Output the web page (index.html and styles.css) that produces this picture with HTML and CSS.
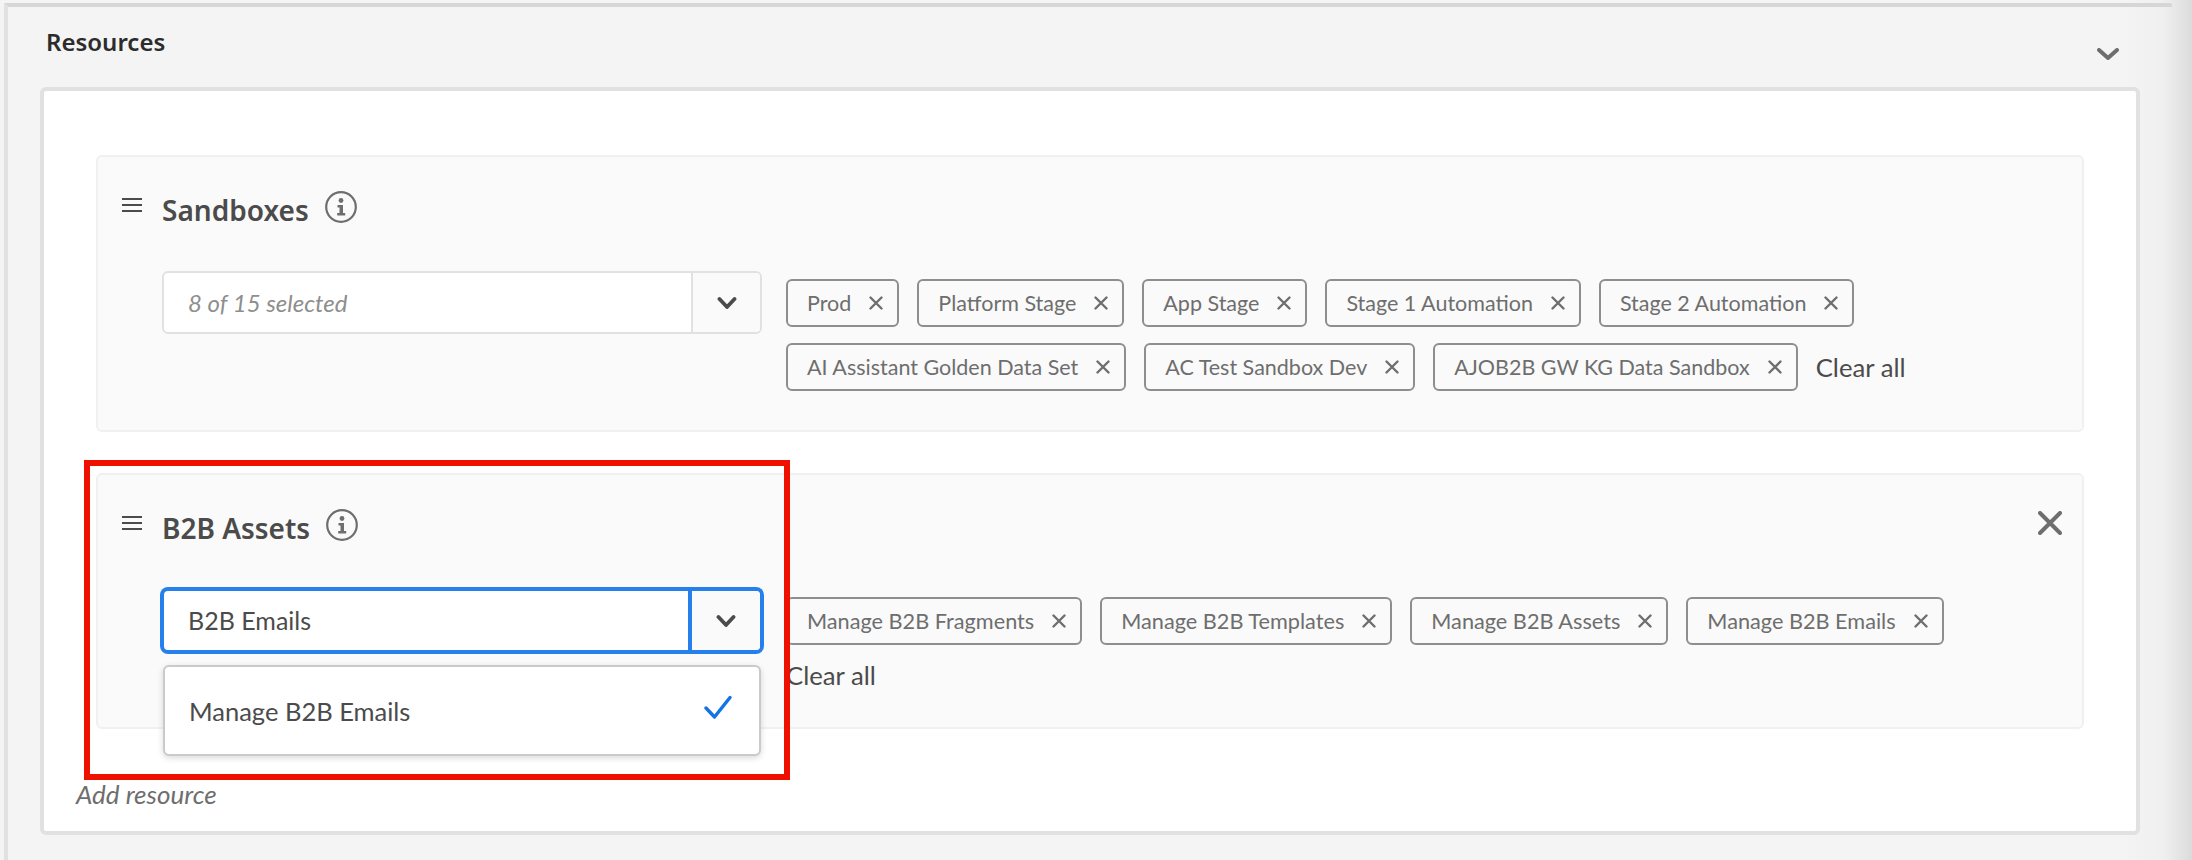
FILE: index.html
```html
<!DOCTYPE html>
<html lang="en">
<head>
    <meta charset="UTF-8">
    <meta name="viewport" content="width=device-width, initial-scale=1.0">
    <title>Resources</title>
    <link rel="stylesheet" href="styles.css">
</head>
<body>
<div class="edgeShade"></div>
<section class="section">
    <div class="sectionHead">
        <h2 class="sectionTitle">Resources</h2>
        <svg class="sectionToggle" width="22" height="12" viewBox="0 0 22 12"><path d="M2 2l9 8 9-8" fill="none" stroke="#6e6e6e" stroke-width="4" stroke-linecap="round" stroke-linejoin="round"/></svg>
    </div>

    <div class="card">
        <div class="panel panelFirst">
            <div class="panelHead">
                <svg class="dragIcon" width="20" height="14" viewBox="0 0 20 14"><path d="M0 1h20M0 7h20M0 13h20" stroke="#4b4b4b" stroke-width="2"/></svg>
                <h3 class="panelTitle">Sandboxes</h3>
                <svg class="infoIcon" width="32" height="32" viewBox="0 0 32 32"><circle cx="16" cy="16" r="14.8" fill="none" stroke="#6e6e6e" stroke-width="2.2"/><circle cx="16" cy="9.500" r="2.400" fill="#6e6e6e"/><path d="M12.500 14h5.500v8h2.200v2.400h-8V22h2.300v-5.600h-2z" fill="#6e6e6e"/></svg>
            </div>
            <div class="panelBody">
                <div class="select">
                    <div class="selectValue selectPlaceholder">8 of 15 selected</div>
                    <div class="selectButton">
                        <svg width="20" height="14" viewBox="0 0 20 14"><path d="M2.500 3l7.500 8 7.500-8" fill="none" stroke="#4b4b4b" stroke-width="3.800" stroke-linecap="round" stroke-linejoin="round"/></svg>
                    </div>
                </div>
                <div class="tags">
                    <span class="tag">Prod<svg class="tagClose" viewBox="0 0 14 14"><path d="M1.500 1.500l11 11M12.500 1.500l-11 11"/></svg></span>
                    <span class="tag">Platform Stage<svg class="tagClose" viewBox="0 0 14 14"><path d="M1.500 1.500l11 11M12.500 1.500l-11 11"/></svg></span>
                    <span class="tag">App Stage<svg class="tagClose" viewBox="0 0 14 14"><path d="M1.500 1.500l11 11M12.500 1.500l-11 11"/></svg></span>
                    <span class="tag">Stage 1 Automation<svg class="tagClose" viewBox="0 0 14 14"><path d="M1.500 1.500l11 11M12.500 1.500l-11 11"/></svg></span>
                    <span class="tag">Stage 2 Automation<svg class="tagClose" viewBox="0 0 14 14"><path d="M1.500 1.500l11 11M12.500 1.500l-11 11"/></svg></span>
                    <span class="tag">AI Assistant Golden Data Set<svg class="tagClose" viewBox="0 0 14 14"><path d="M1.500 1.500l11 11M12.500 1.500l-11 11"/></svg></span>
                    <span class="tag">AC Test Sandbox Dev<svg class="tagClose" viewBox="0 0 14 14"><path d="M1.500 1.500l11 11M12.500 1.500l-11 11"/></svg></span>
                    <span class="tag">AJOB2B GW KG Data Sandbox<svg class="tagClose" viewBox="0 0 14 14"><path d="M1.500 1.500l11 11M12.500 1.500l-11 11"/></svg></span>
                    <span class="clearAll">Clear all</span>
                </div>
            </div>
        </div>

        <div class="panel panelSecond">
            <div class="panelHead">
                <svg class="dragIcon" width="20" height="14" viewBox="0 0 20 14"><path d="M0 1h20M0 7h20M0 13h20" stroke="#4b4b4b" stroke-width="2"/></svg>
                <h3 class="panelTitle">B2B Assets</h3>
                <svg class="infoIcon" width="32" height="32" viewBox="0 0 32 32"><circle cx="16" cy="16" r="14.8" fill="none" stroke="#6e6e6e" stroke-width="2.2"/><circle cx="16" cy="9.500" r="2.400" fill="#6e6e6e"/><path d="M12.500 14h5.500v8h2.200v2.400h-8V22h2.300v-5.600h-2z" fill="#6e6e6e"/></svg>
                <svg class="panelClose" width="24" height="24" viewBox="0 0 24 24"><path d="M2 2l20 20M22 2L2 22" stroke="#6e6e6e" stroke-width="4" stroke-linecap="round"/></svg>
            </div>
            <div class="panelBody">
                <div class="select selectFocused">
                    <div class="selectValue">B2B Emails</div>
                    <div class="selectButton">
                        <svg width="20" height="14" viewBox="0 0 20 14"><path d="M2.500 3l7.500 8 7.500-8" fill="none" stroke="#4b4b4b" stroke-width="3.800" stroke-linecap="round" stroke-linejoin="round"/></svg>
                    </div>
                    <div class="menu">
                        <span>Manage B2B Emails</span>
                        <svg class="menuCheck" width="28" height="24" viewBox="0 0 28 24"><path d="M2 13l8.500 9L26 2.500" fill="none" stroke="#1473e6" stroke-width="3.400" stroke-linecap="round" stroke-linejoin="round"/></svg>
                    </div>
                </div>
                <div class="tags">
                    <span class="tag">Manage B2B Fragments<svg class="tagClose" viewBox="0 0 14 14"><path d="M1.500 1.500l11 11M12.500 1.500l-11 11"/></svg></span>
                    <span class="tag">Manage B2B Templates<svg class="tagClose" viewBox="0 0 14 14"><path d="M1.500 1.500l11 11M12.500 1.500l-11 11"/></svg></span>
                    <span class="tag">Manage B2B Assets<svg class="tagClose" viewBox="0 0 14 14"><path d="M1.500 1.500l11 11M12.500 1.500l-11 11"/></svg></span>
                    <span class="tag">Manage B2B Emails<svg class="tagClose" viewBox="0 0 14 14"><path d="M1.500 1.500l11 11M12.500 1.500l-11 11"/></svg></span>
                    <span class="clearAll">Clear all</span>
                </div>
            </div>
        </div>

        <div class="addResource">Add resource</div>
    </div>
</section>
<div class="highlight"></div>
</body>
</html>
```

FILE: styles.css
```css
body {
    font-family: "Lato", "Noto Sans", sans-serif;
    margin: 0;
    height: 860px;
    overflow: hidden;
    position: relative;
    background-color: #f4f4f4;
    color: #4b4b4b;
}

.edgeShade {
    position: absolute;
    top: 0;
    right: 0;
    bottom: 0;
    width: 70px;
    background: linear-gradient(to right, rgba(0, 0, 0, 0), rgba(0, 0, 0, 0.02) 60%, rgba(0, 0, 0, 0.1));
}

.section {
    position: relative;
    min-height: 853px;
    margin: 3px 20px 0 4px;
    border-top: 4px solid #d6d6d6;
    border-top-right-radius: 2px;
    border-left: 4px solid #e1e1e1;
}

.sectionHead {
    display: flex;
    justify-content: space-between;
    height: 80px;
    padding: 0 53px 0 38px;
}

.sectionTitle {
    margin: 19px 0 0;
    font-family: "Noto Sans", sans-serif;
    font-size: 24px;
    line-height: 32px;
    font-weight: 600;
    color: #2c2c2c;
}

.sectionToggle {
    margin-top: 41px;
}

.card {
    box-sizing: border-box;
    width: 2100px;
    margin-left: 32px;
    padding: 64px 52px 22px;
    background-color: #fff;
    border: 4px solid #e1e1e1;
    border-radius: 6px;
}

.panel {
    box-sizing: border-box;
    width: 1988px;
    padding: 34px 20px 0 24px;
    background-color: #fafafa;
    border: 2px solid #f0f0f0;
    border-radius: 6px;
}

.panelFirst {
    height: 277px;
    margin-bottom: 41px;
}

.panelSecond {
    height: 256px;
}

.panelHead {
    display: flex;
    align-items: flex-start;
    height: 40px;
    margin-bottom: 40px;
}

.dragIcon {
    margin: 7px 20px 0 0;
}

.panelTitle {
    margin: 0 16px 0 0;
    font-family: "Noto Sans", sans-serif;
    font-size: 28px;
    line-height: 38px;
    font-weight: 600;
    color: #4b4b4b;
}

.panelClose {
    margin: 2px 0 0 auto;
}

.panelBody {
    display: flex;
    align-items: flex-start;
    padding-left: 40px;
}

.select {
    box-sizing: border-box;
    position: relative;
    display: flex;
    flex: none;
    width: 600px;
    height: 63px;
    margin-right: 24px;
    background-color: #fff;
    border: 2px solid #e1e1e1;
    border-radius: 6px;
}

.selectValue {
    flex: 1;
    padding-left: 24px;
    font-size: 25px;
    line-height: 59px;
    color: #4b4b4b;
}

.selectPlaceholder {
    font-size: 24px;
    font-style: italic;
    color: #8e8e8e;
}

.selectButton {
    box-sizing: border-box;
    display: flex;
    justify-content: center;
    align-items: center;
    width: 69px;
    background-color: #fafafa;
    border-left: 2px solid #e1e1e1;
    border-radius: 0 4px 4px 0;
}

.selectFocused {
    border-color: #2680eb;
    box-shadow: 0 0 0 2px #2680eb;
}

.selectFocused .selectButton {
    width: 72px;
    border-left: 4px solid #2680eb;
}

.menu {
    box-sizing: border-box;
    position: absolute;
    top: 74px;
    left: -1px;
    right: -1px;
    height: 91px;
    display: flex;
    justify-content: space-between;
    align-items: center;
    padding: 0 27px 0 24px;
    font-size: 25.5px;
    background-color: #fff;
    border: 2px solid #cacaca;
    border-radius: 6px;
    box-shadow: 0 2px 6px rgba(0, 0, 0, 0.15);
}

.menuCheck {
    margin-top: -8px;
}

.tags {
    display: flex;
    flex-wrap: wrap;
    align-items: center;
    gap: 16px 18px;
    width: 1200px;
    margin-top: 8px;
}

.tag {
    box-sizing: border-box;
    display: inline-flex;
    align-items: center;
    gap: 18px;
    height: 48px;
    padding: 0 14px 0 19px;
    font-size: 21.7px;
    color: #6e6e6e;
    border: 2px solid #8e8e8e;
    border-radius: 6px;
}

.panelFirst .tag {
    font-size: 21.5px;
}

.tagClose {
    width: 14px;
    height: 14px;
    fill: none;
    stroke: #6e6e6e;
    stroke-width: 2.4;
    stroke-linecap: round;
}

.clearAll {
    font-size: 25.7px;
    line-height: 28px;
    color: #4b4b4b;
}

.addResource {
    margin: 50px 0 0 -20px;
    font-size: 26px;
    line-height: 30px;
    font-style: italic;
    color: #6e6e6e;
}

.highlight {
    box-sizing: border-box;
    position: absolute;
    left: 84px;
    top: 460px;
    width: 706px;
    height: 320px;
    border: 6px solid #ee1100;
}
```
